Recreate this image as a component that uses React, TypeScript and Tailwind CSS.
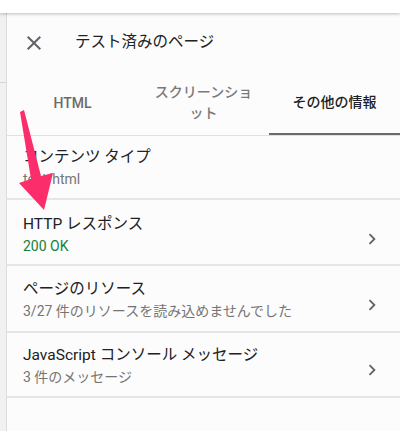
const font = { fontFamily: '"Roboto", "Noto Sans CJK JP", sans-serif' };

type Row = { title: string; sub: string; green?: boolean; chevron?: boolean; h: string; pt: string };

const rows: Row[] = [
  { title: "コンテンツ タイプ", sub: "text/html", h: "h-[64px]", pt: "pt-[10px]" },
  { title: "HTTP レスポンス", sub: "200 OK", green: true, chevron: true, h: "h-[66px]", pt: "pt-[13px]" },
  { title: "ページのリソース", sub: "3/27 件のリソースを読み込めませんでした", chevron: true, h: "h-[67px]", pt: "pt-[12px]" },
  { title: "JavaScript コンソール メッセージ", sub: "3 件のメッセージ", chevron: true, h: "h-[65px]", pt: "pt-[11px]" },
];

function Chevron() {
  return (
    <svg width="22" height="22" viewBox="0 0 24 24" className="shrink-0 text-[#5f6368]">
      <path d="M10 6L8.59 7.41 13.17 12l-4.58 4.59L10 18l6-6z" fill="currentColor" />
    </svg>
  );
}

export default function App() {
  return (
    <div className="relative w-[400px] h-[431px] overflow-hidden bg-white flex flex-col" style={font}>
      {/* top bar */}
      <div className="h-[13px] bg-white shadow-[0_1px_3px_rgba(0,0,0,0.25)] z-10 shrink-0" />

      <div className="flex flex-1">
        {/* left strip */}
        <div className="w-[7px] bg-[#f1f1f1] border-r border-[#dcdcdc] shrink-0 flex flex-col">
          <div className="h-[69px]" />
          <div className="h-px bg-[#d6d6d6]" />
        </div>

        {/* panel */}
        <div className="flex-1 bg-[#fcfcfc] flex flex-col">
          <div className="h-[60px] flex items-center pl-[15px]">
            <svg width="24" height="24" viewBox="0 0 24 24" className="text-[#5f6368] shrink-0">
              <path
                d="M19 6.41L17.59 5 12 10.59 6.41 5 5 6.41 10.59 12 5 17.59 6.41 19 12 13.41 17.59 19 19 17.59 13.41 12z"
                fill="currentColor"
              />
            </svg>
            <div className="ml-[29px] text-[15.5px] text-[#202124] leading-none">テスト済みのページ</div>
          </div>

          {/* tabs */}
          <div className="h-[63px] grid grid-cols-3 border-b border-[#e0e0e0]">
            <div className="flex items-center justify-center text-[14px] font-medium text-[#6b6b6b] pb-[2px]">HTML</div>
            <div className="flex items-center justify-center text-center px-3 text-[14px] leading-[21px] font-medium text-[#7a7a7a] pb-[3px]">
              スクリーンショット
            </div>
            <div className="relative flex items-center justify-center text-[14px] font-medium text-[#202124] pb-[4px]">
              その他の情報
              <div className="absolute left-0 right-0 bottom-0 h-[2px] bg-[#6b6b6b]" />
            </div>
          </div>

          {rows.map((r) => (
            <div key={r.title} className={`${r.h} ${r.pt} flex items-start border-b-2 border-[#e6e6e6] pl-[16px] pr-[17px]`}>
              <div className="flex-1">
                <div className="text-[15.5px] leading-[22px] text-[#202124]">{r.title}</div>
                <div className={`text-[14px] leading-[22px] ${r.green ? "text-[#188038]" : "text-[#757575]"}`}>{r.sub}</div>
              </div>
              {r.chevron && (
                <div className="self-center">
                  <Chevron />
                </div>
              )}
            </div>
          ))}
        </div>
      </div>

      {/* annotation arrow */}
      <svg className="absolute left-0 top-0 pointer-events-none" width="400" height="431">
        <polygon
          points="20,112 24,110 41,176 53,173 44,210 19,183 31,179"
          fill="#fb2d6b"
        />
      </svg>
    </div>
  );
}
